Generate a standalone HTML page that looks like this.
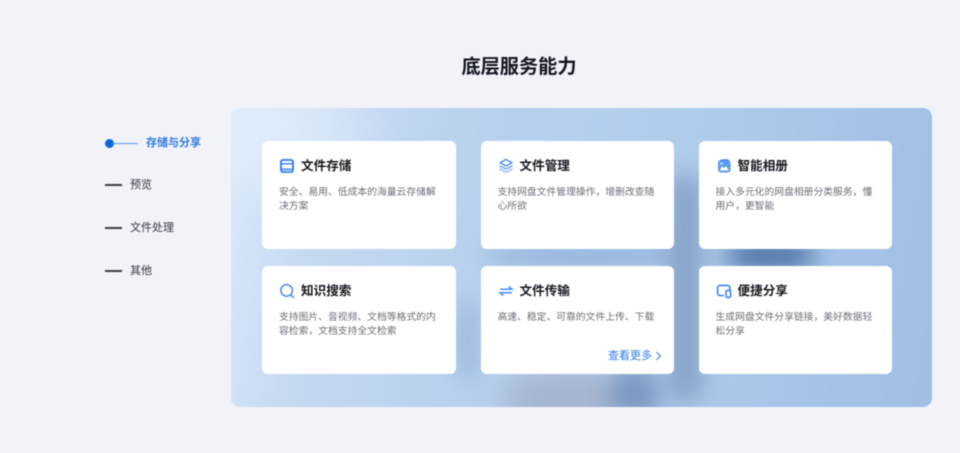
<!DOCTYPE html>
<html lang="zh">
<head>
<meta charset="utf-8">
<style>
html,body{margin:0;padding:0;width:960px;height:453px;overflow:hidden;background:#f1f3f9}
body{font-family:"Liberation Sans","Noto Sans CJK SC",sans-serif;position:relative}
#w{position:absolute;inset:0;filter:blur(.45px)}
h1{position:absolute;left:0;top:55px;width:1038px;margin:0;text-align:center;font-size:19.2px;line-height:26px;font-weight:700;color:#12151f}
.nav{position:absolute;font-size:11px;line-height:16px;color:#33363d;white-space:nowrap}
.bar{position:absolute;left:105px;width:17px;height:2px;background:#3a3d44}
.panel{position:absolute;left:231px;top:108px;width:701px;height:299px;border-radius:9px;overflow:hidden;background:linear-gradient(100deg,#dceafb 0%,#c5d9f1 14%,#b9d1ee 35%,#b1cdec 60%,#a5c3e8 85%,#a0bfe3 100%)}
.blob{position:absolute;border-radius:50%}
.card{position:absolute;width:193.5px;height:108px;background:#fff;border-radius:6px}
.ic{position:absolute;left:17px;top:16.5px;width:16px;height:16px}
.t{position:absolute;left:39px;top:16px;font-size:12.6px;line-height:19px;font-weight:700;color:#16191f;white-space:nowrap}
.d{position:absolute;left:17px;top:45px;width:160px;font-size:9.8px;line-height:14px;color:#6b6f77}
.more{position:absolute;right:22px;top:83px;font-size:11px;line-height:15px;color:#2f7be6;white-space:nowrap}
svg{display:block;overflow:visible}
</style>
</head>
<body>
<div id="w">
<h1>底层服务能力</h1>

<div style="position:absolute;left:105px;top:139px;width:9px;height:9px;border-radius:50%;background:#0b63de"></div>
<div style="position:absolute;left:112px;top:142.5px;width:26px;height:1px;background:#5c9aec"></div>
<div class="nav" style="left:146px;top:135px;color:#2f78e4;font-weight:700">存储与分享</div>
<div class="bar" style="top:184px"></div><div class="nav" style="left:130px;top:177px">预览</div>
<div class="bar" style="top:227px"></div><div class="nav" style="left:130px;top:220px">文件处理</div>
<div class="bar" style="top:270px"></div><div class="nav" style="left:130px;top:263px">其他</div>

<div class="panel">
  <div class="blob" style="left:-30px;top:-30px;width:170px;height:110px;background:#e6f1fd;opacity:.6;filter:blur(28px)"></div>
  <div class="blob" style="left:250px;top:134px;width:200px;height:28px;background:#8fb1d8;opacity:.75;filter:blur(10px)"></div>
  <div class="blob" style="left:436px;top:65px;width:36px;height:230px;background:#7f9bc2;opacity:.8;filter:blur(11px);border-radius:18px"></div>
  <div class="blob" style="left:222px;top:190px;width:30px;height:85px;background:#92b1d8;opacity:.55;filter:blur(9px)"></div>
  <div class="blob" style="left:492px;top:130px;width:94px;height:34px;background:#4f75a6;opacity:.95;filter:blur(11px)"></div>
  <div class="blob" style="left:270px;top:262px;width:135px;height:56px;background:#a5b3ce;opacity:.95;filter:blur(14px)"></div>
  <div class="blob" style="left:378px;top:258px;width:52px;height:56px;background:#7895bf;opacity:.9;filter:blur(11px)"></div>
</div>

<div class="card" style="left:262px;top:141px">
  <svg class="ic" viewBox="0 0 16 16" fill="none" stroke="#3d83ee"><rect x="2" y="2" width="12" height="12" rx="2.2" stroke-width="2"/><path d="M3 5.8H13" stroke-width="1.4"/><path d="M3 11.2H13" stroke-width="1.4"/><path d="M5 13.2H11" stroke="#7eaef5" stroke-width="1.4"/></svg>
  <div class="t">文件存储</div>
  <div class="d">安全、易用、低成本的海量云存储解决方案</div>
</div>
<div class="card" style="left:480.5px;top:141px">
  <svg class="ic" viewBox="0 0 16 16" fill="none" stroke="#4a8cf0" stroke-width="1.4" stroke-linejoin="round" stroke-linecap="round"><path d="M8 1.5 14 4.8 8 8 2 4.8Z"/><path d="M2 8 8 11 14 8" stroke="#6ea4f3"/><path d="M2 11 8 14.3 14 11" stroke="#8fbaf6"/></svg>
  <div class="t">文件管理</div>
  <div class="d">支持网盘文件管理操作，增删改查随心所欲</div>
</div>
<div class="card" style="left:698.5px;top:141px">
  <svg class="ic" viewBox="0 0 16 16" fill="none"><rect x="2" y="2" width="12.5" height="12.5" rx="2.8" fill="#5e9bf2"/><path d="M4.5 2.4 10 1.6 13 2.4" stroke="#3d83ee" stroke-width="1.2"/><path d="M3.8 12.5 6 8.2 8 10 10 8 12.8 12.5Z" fill="#fff"/><circle cx="5.4" cy="5.6" r="1.2" fill="#cfe1fb"/></svg>
  <div class="t">智能相册</div>
  <div class="d">接入多元化的网盘相册分类服务，懂用户，更智能</div>
</div>
<div class="card" style="left:262px;top:266px">
  <svg class="ic" viewBox="0 0 16 16" fill="none" stroke="#4a8cf0" stroke-width="1.5" stroke-linecap="round"><circle cx="7.6" cy="7.4" r="5.8"/><path d="M12 12 14.6 14.6"/></svg>
  <div class="t">知识搜索</div>
  <div class="d">支持图片、音视频、文档等格式的内容检索，文档支持全文检索</div>
</div>
<div class="card" style="left:480.5px;top:266px">
  <svg class="ic" viewBox="0 0 16 16" fill="none" stroke="#4a8cf0" stroke-width="1.5"><path d="M2 6.2H14L10.5 3.4"/><path d="M14 9.8H2L5.5 12.6"/></svg>
  <div class="t">文件传输</div>
  <div class="d">高速、稳定、可靠的文件上传、下载</div>
  <div class="more">查看更多</div>
  <svg style="position:absolute;left:174px;top:85px;width:7px;height:10px" viewBox="0 0 7 10" fill="none" stroke="#2f7be6" stroke-width="1.1"><path d="M1.5 1 5.5 5 1.5 9"/></svg>
</div>
<div class="card" style="left:698.5px;top:266px">
  <svg class="ic" viewBox="0 0 16 16" fill="none" stroke="#3d83ee" stroke-width="1.6"><path d="M8 12.5H4A2.4 2.4 0 0 1 1.6 10V4.6A2.4 2.4 0 0 1 4 2.4H11.5A2.4 2.4 0 0 1 13.9 4.6V7"/><rect x="10" y="7.4" width="4.6" height="7" rx="1.4"/></svg>
  <div class="t">便捷分享</div>
  <div class="d">生成网盘文件分享链接，美好数据轻松分享</div>
</div>
</div>
</body>
</html>
